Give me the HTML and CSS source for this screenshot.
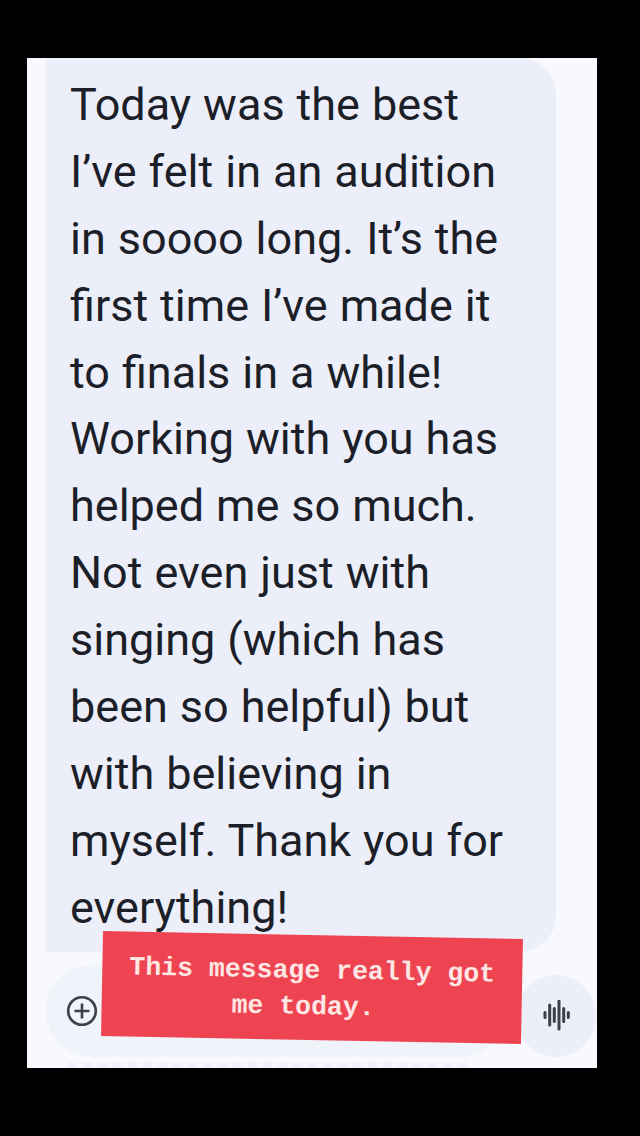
FILE: index.html
```html
<!DOCTYPE html>
<html lang="en">
<head>
    <meta charset="UTF-8">
    <meta name="viewport" content="width=device-width, initial-scale=1.0">
    <title>Message</title>
    <link rel="stylesheet" href="styles.css">
</head>
<body>
    <div class="screen">
        <div class="bubble">
            <p class="line">Today was the best</p>
            <p class="line">I’ve felt in an audition</p>
            <p class="line">in soooo long. It’s the</p>
            <p class="line">first time I’ve made it</p>
            <p class="line">to finals in a while!</p>
            <p class="line">Working with you has</p>
            <p class="line">helped me so much.</p>
            <p class="line">Not even just with</p>
            <p class="line">singing (which has</p>
            <p class="line">been so helpful) but</p>
            <p class="line">with believing in</p>
            <p class="line">myself. Thank you for</p>
            <p class="line">everything!</p>
        </div>

        <div class="composer">
            <div class="input-pill">
                <svg class="plus-icon" viewBox="0 0 32 32" width="32" height="32">
                    <circle cx="16" cy="16" r="13.8" fill="none" stroke="#3c4048" stroke-width="2.6"/>
                    <path d="M16 8.5v15M8.5 16h15" fill="none" stroke="#3c4048" stroke-width="2.6"/>
                </svg>
            </div>
            <div class="voice-btn">
                <svg viewBox="0 0 30 32" width="30" height="32">
                    <path d="M4 12.5v5M8.7 5v20M13.3 8.5v13M18 1v28M22.7 8.5v13M27.3 12.5v5" fill="none" stroke="#3c4048" stroke-width="3" stroke-linecap="round"/>
                </svg>
            </div>
        </div>

        <!-- the next message, almost hidden under the edge -->
        <div class="ghost-row"></div>

        <div class="caption">
            <span>This message really got</span>
            <span class="caption-short">me today.</span>
        </div>
    </div>
</body>
</html>
```

FILE: styles.css
```css
html, body {
    margin: 0;
    padding: 0;
}

body {
    width: 640px;
    height: 1136px;
    overflow: hidden;
    background-color: #000;
}

.screen {
    position: relative;
    box-sizing: border-box;
    width: 570px;
    height: 1010px;
    margin: 58px 0 0 27px;
    padding-left: 19px;
    overflow: hidden;
    background-color: #f8f9fe;
}

.bubble {
    box-sizing: border-box;
    width: 510px;
    height: 894px;
    padding: 14px 0 0 24px;
    background-color: #eceefa;
    border-radius: 0 36px 36px 0;
}

.line {
    margin: 0;
    height: 66.9px;
    font-family: Roboto, sans-serif;
    font-size: 45px;
    word-spacing: 0.8px;
    line-height: 66.9px;
    white-space: nowrap;
    color: #1c1e28;
}

.composer {
    display: flex;
    justify-content: space-between;
    align-items: flex-end;
    height: 92px;
    margin-top: 13px;
    padding-right: 1px;
}

.input-pill {
    display: flex;
    align-items: center;
    box-sizing: border-box;
    width: 460px;
    height: 92px;
    padding-left: 20px;
    background-color: #f1f3fa;
    border-radius: 46px;
}

.voice-btn {
    display: flex;
    align-items: center;
    justify-content: center;
    width: 80px;
    height: 82px;
    background-color: #eceff8;
    border-radius: 50%;
}

.ghost-row {
    width: 400px;
    height: 6px;
    margin: 5px 0 0 22px;
    background-image: repeating-linear-gradient(90deg, #f1f2f9 0 9px, #f7f8fd 9px 15px);
}

.caption {
    position: absolute;
    left: 75px;
    top: 877px;
    display: flex;
    flex-direction: column;
    align-items: center;
    box-sizing: border-box;
    width: 420px;
    height: 105px;
    padding-top: 18px;
    font-family: "Liberation Mono", monospace;
    font-size: 26.5px;
    font-weight: bold;
    line-height: 36px;
    color: #fde6e3;
    background-color: #ee4452;
    transform: rotate(1.1deg);
}

.caption-short {
    padding-right: 17px;
}
```
